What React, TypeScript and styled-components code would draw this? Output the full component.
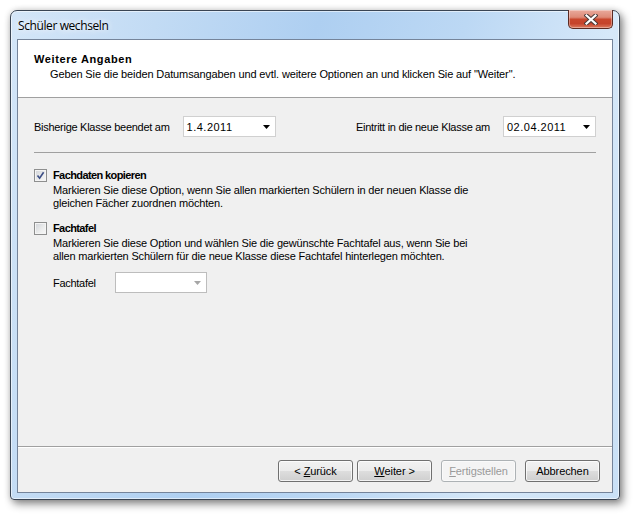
import React from "react";
import styled, { createGlobalStyle } from "styled-components";

const GlobalStyle = createGlobalStyle`
  html, body { margin: 0; padding: 0; background: #ffffff; }
  body {
    width: 638px;
    height: 518px;
    overflow: hidden;
    font-family: "Liberation Sans", Arial, sans-serif;
    font-size: 11px;
    color: #000;
  }
`;

const Desktop = styled.div`
  width: 638px;
  height: 518px;
  box-sizing: border-box;
  padding: 10px 0 0 10px;
  background: #ffffff;
`;

const Window = styled.div`
  width: 610px;
  height: 490px;
  box-sizing: border-box;
  border: 1px solid #3a4554;
  border-radius: 7px 7px 4px 4px;
  background: linear-gradient(
    105deg,
    #d4e6f8 0%,
    #c2dbf4 20%,
    #aecff1 42%,
    #bcd8f4 62%,
    #d6e8f9 82%,
    #c9e0f6 100%
  );
  box-shadow: inset 0 0 0 1px rgba(255, 255, 255, 0.55),
    3px 4px 9px rgba(0, 0, 0, 0.45), 0 0 6px rgba(0, 0, 0, 0.15);
  display: flex;
  flex-direction: column;
  padding: 0 6px 6px 6px;
`;

const TitleBar = styled.div`
  height: 28px;
  display: flex;
  align-items: center;
  justify-content: space-between;
`;

const Caption = styled.span`
  margin-left: 1px;
  font-family: "Open Sans", "Noto Sans", sans-serif;
  font-size: 12px;
  letter-spacing: -0.4px;
  color: #000;
  text-shadow: 0 0 6px rgba(255, 255, 255, 0.9), 0 0 10px rgba(255, 255, 255, 0.7);
`;

const CloseButton = styled.div`
  align-self: flex-start;
  margin-top: -1px;
  width: 45px;
  height: 19px;
  box-sizing: border-box;
  border: 1px solid #5b2a22;
  border-top: none;
  border-radius: 0 0 5px 5px;
  background: linear-gradient(
    to bottom,
    #e9aa9c 0%,
    #de8a77 40%,
    #c9472d 52%,
    #c5432b 75%,
    #dc7a5e 100%
  );
  box-shadow: inset 0 0 0 1px rgba(255, 255, 255, 0.35);
  display: flex;
  align-items: center;
  justify-content: center;
`;

const Client = styled.div`
  flex: 1;
  min-height: 0;
  border: 1px solid #75849a;
  background: #f0f0f0;
  display: flex;
  flex-direction: column;
`;

const Header = styled.div`
  height: 58px;
  box-sizing: border-box;
  background: #ffffff;
  border-bottom: 1px solid #a0a0a0;
  padding: 12px 0 0 16px;
`;

const HeaderTitle = styled.div`
  font-weight: bold;
  font-size: 11px;
  line-height: 14px;
  letter-spacing: 0.6px;
`;

const HeaderText = styled.div`
  margin-top: 1px;
  padding-left: 16px;
  line-height: 14px;
  letter-spacing: -0.12px;
`;

const Content = styled.div`
  flex: 1;
  padding: 18px 16px 0 16px;
  display: flex;
  flex-direction: column;
`;

const DateRow = styled.div`
  display: flex;
  justify-content: space-between;
  align-items: center;
`;

const Field = styled.div`
  display: flex;
  align-items: center;
  gap: 13px;
`;

const Label = styled.span<{ $width?: number }>`
  letter-spacing: -0.28px;
  white-space: nowrap;
  ${(p) => (p.$width ? `width: ${p.$width}px;` : "")}
`;

const Combo = styled.div<{ $disabled?: boolean }>`
  width: ${(p) => (p.$disabled ? 92 : 93)}px;
  height: 21px;
  box-sizing: border-box;
  border: 1px solid ${(p) => (p.$disabled ? "#bdbdbd" : "#d0d0d0")};
  background: #ffffff;
  display: flex;
  align-items: center;
  justify-content: space-between;
  padding: 0 5px 0 3px;
  letter-spacing: 0.5px;
  color: #000;
`;

const Separator = styled.div`
  margin-top: 15px;
  height: 1px;
  background: #a0a0a0;
`;

const Option = styled.div<{ $first?: boolean }>`
  margin-top: ${(p) => (p.$first ? 16 : 12)}px;
`;

const OptionHead = styled.div`
  display: grid;
  grid-template-columns: 13px 1fr;
  column-gap: 6px;
  align-items: center;
  height: 13px;
`;

const OptionTitle = styled.span`
  font-weight: bold;
  line-height: 13px;
  letter-spacing: -0.6px;
`;

const OptionText = styled.div`
  margin-top: 2px;
  padding-left: 19px;
  line-height: 13px;
  letter-spacing: -0.17px;
`;

const Box = styled.span`
  width: 13px;
  height: 13px;
  box-sizing: border-box;
  border: 1px solid #8e8f8f;
  background: linear-gradient(135deg, #d0d3d8 0%, #eceded 60%, #f8f8f8 100%);
  box-shadow: inset 0 0 0 1px #f4f4f4;
  display: flex;
  align-items: center;
  justify-content: center;
`;

const FachtafelRow = styled.div`
  margin-top: 9px;
  padding-left: 19px;
  display: flex;
  align-items: center;
`;

const Footer = styled.div`
  height: 46px;
  box-sizing: border-box;
  border-top: 1px solid #a0a0a0;
  box-shadow: inset 0 1px 0 #ffffff;
  padding: 13px 12px 0 0;
  display: flex;
  justify-content: flex-end;
  align-items: flex-start;
`;

const WizardButton = styled.div<{ $disabled?: boolean; $gap: number }>`
  margin-left: ${(p) => p.$gap}px;
  width: 75px;
  height: 22px;
  box-sizing: border-box;
  border: 1px solid ${(p) => (p.$disabled ? "#adb2b5" : "#707070")};
  border-radius: 3px;
  background: ${(p) =>
    p.$disabled
      ? "#f4f4f4"
      : "linear-gradient(to bottom, #f2f2f2 0%, #ebebeb 50%, #dddddd 51%, #cfcfcf 100%)"};
  box-shadow: inset 0 0 0 1px ${(p) => (p.$disabled ? "#fafafa" : "rgba(255,255,255,0.75)")};
  color: ${(p) => (p.$disabled ? "#9a9a9a" : "#000")};
  display: flex;
  align-items: center;
  justify-content: center;
  letter-spacing: -0.1px;
  line-height: 1;
`;

const Arrow = ({ color }: { color: string }) => (
  <svg width="7" height="4" viewBox="0 0 7 4">
    <polygon points="0,0 7,0 3.5,4" fill={color} />
  </svg>
);

const Check = () => (
  <svg width="9" height="9" viewBox="0 0 9 9">
    <path d="M1.5 4.6 L3.6 7.2 L7.6 1.2" fill="none" stroke="#3d4f86" strokeWidth="1.6" />
  </svg>
);

const CloseGlyph = () => (
  <svg width="14" height="11" viewBox="0 0 14 11">
    <path d="M2.5 1.5 L11.5 9.5 M11.5 1.5 L2.5 9.5" stroke="#4a3a38" strokeWidth="4.2" strokeLinecap="square" />
    <path d="M2.5 1.5 L11.5 9.5 M11.5 1.5 L2.5 9.5" stroke="#ffffff" strokeWidth="2.2" strokeLinecap="square" />
  </svg>
);

export default function App() {
  return (
    <>
      <GlobalStyle />
      <Desktop>
        <Window>
          <TitleBar>
            <Caption>Schüler wechseln</Caption>
            <CloseButton>
              <CloseGlyph />
            </CloseButton>
          </TitleBar>
          <Client>
            <Header>
              <HeaderTitle>Weitere Angaben</HeaderTitle>
              <HeaderText>
                Geben Sie die beiden Datumsangaben und evtl. weitere Optionen an und klicken Sie auf "Weiter".
              </HeaderText>
            </Header>
            <Content>
              <DateRow>
                <Field>
                  <Label>Bisherige Klasse beendet am</Label>
                  <Combo>
                    <span>1.4.2011</span>
                    <Arrow color="#000" />
                  </Combo>
                </Field>
                <Field>
                  <Label>Eintritt in die neue Klasse am</Label>
                  <Combo>
                    <span>02.04.2011</span>
                    <Arrow color="#000" />
                  </Combo>
                </Field>
              </DateRow>
              <Separator />
              <Option $first>
                <OptionHead>
                  <Box>
                    <Check />
                  </Box>
                  <OptionTitle>Fachdaten kopieren</OptionTitle>
                </OptionHead>
                <OptionText>
                  Markieren Sie diese Option, wenn Sie allen markierten Schülern in der neuen Klasse die
                  <br />
                  gleichen Fächer zuordnen möchten.
                </OptionText>
              </Option>
              <Option>
                <OptionHead>
                  <Box />
                  <OptionTitle>Fachtafel</OptionTitle>
                </OptionHead>
                <OptionText>
                  Markieren Sie diese Option und wählen Sie die gewünschte Fachtafel aus, wenn Sie bei
                  <br />
                  allen markierten Schülern für die neue Klasse diese Fachtafel hinterlegen möchten.
                </OptionText>
                <FachtafelRow>
                  <Label $width={62}>Fachtafel</Label>
                  <Combo $disabled>
                    <span />
                    <Arrow color="#a6a6a6" />
                  </Combo>
                </FachtafelRow>
              </Option>
            </Content>
            <Footer>
              <WizardButton $gap={0}>
                &lt;&nbsp;<u>Z</u>urück
              </WizardButton>
              <WizardButton $gap={4}>
                <u>W</u>eiter &gt;
              </WizardButton>
              <WizardButton $gap={9} $disabled>
                <u>F</u>ertigstellen
              </WizardButton>
              <WizardButton $gap={9}>Abbrechen</WizardButton>
            </Footer>
          </Client>
        </Window>
      </Desktop>
    </>
  );
}
